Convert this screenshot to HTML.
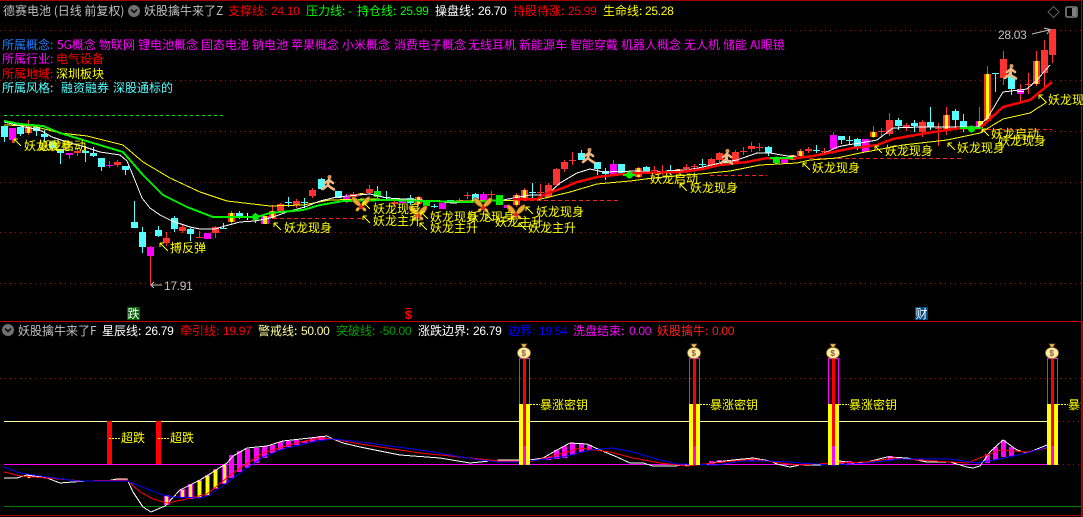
<!DOCTYPE html>
<html lang="zh"><head><meta charset="utf-8"><title>妖股擒牛</title>
<style>
html,body{margin:0;padding:0;background:#000;width:1083px;height:517px;overflow:hidden}
svg{display:block;position:absolute;left:0;top:0}
text{font-family:"WenQuanYi Zen Hei","Noto Sans CJK SC","Liberation Sans",sans-serif;font-size:12px;white-space:pre}
.n{font-family:"Liberation Sans","WenQuanYi Zen Hei",sans-serif;font-size:12px;letter-spacing:-.3px}
.d{font-family:"Liberation Sans",sans-serif;font-weight:bold}
.y{fill:#ff0}.r{fill:#f00}.c{fill:#5ff}.m{fill:#f0f}.w{fill:#fff}.g{fill:#0f0}.s{fill:#c0c0c0}
.ln{fill:none;shape-rendering:crispEdges}
.cd path{fill:none;shape-rendering:crispEdges}
</style></head><body>
<svg width="1083" height="517" viewBox="0 0 1083 517" xmlns="http://www.w3.org/2000/svg">
<defs>
<g id="bf"><path d="M0 1C-2-5-7-8-9-7-10-3-6 1 0 3ZM0 1C2-5 7-8 9-7 10-3 6 1 0 3Z" fill="#e8a830" stroke="#7a4a10" stroke-width=".7"/><path d="M-1 3C-3 3-6 4-5 7-3 8-1 6-1 3ZM1 3C3 3 6 4 5 7 3 8 1 6 1 3Z" fill="#f0c040" stroke="#7a4a10" stroke-width=".6"/><circle cy="3" r="2.2" fill="#f02020"/></g>
<g id="pn"><circle cx="0.5" cy="-6" r="2" fill="#d89858"/><path d="M0-3.5L-1 2-6 6M-1 2L1 4 5 6.5M0-3-4 0M0-3 4 0" fill="none" stroke="#f0b880" stroke-width="2.6" stroke-linecap="round" stroke-linejoin="round"/></g>
</defs>
<rect width="1083" height="517" fill="#000"/>
<!-- frame -->
<g class="ln">
<path d="M0 .5H1081" stroke="#a00000"/>
<path d="M0 321.5H1081" stroke="#c00000"/>
<path d="M1081.5 0V321" stroke="#a00000"/>
<path d="M1082 321V517" stroke="#b00000" stroke-width="2"/>
<path d="M0 515.5H1081" stroke="#a00000"/>
<path d="M0 30.5H1081M0 80.5H1081M0 131.5H1081M0 182.5H1081M0 232.5H1081M0 283.5H1081M0 378.5H1081" stroke="#a01010" stroke-dasharray="1 4"/>
<path d="M4 115.5H224" stroke="#00e000" stroke-dasharray="3 3"/>
<path d="M273 218.5H363M523 200.5H620M710 175.5H767M810 158.5H963M987 129.5H1052" stroke="#ff2020" stroke-dasharray="4 3"/>
</g>
<!-- candles -->
<g class="cd">
<path stroke="#5ff" d="M4.5 126V142M20.5 127V136M36.5 127V136M44.5 130V142M52.5 141V150M60.5 149V164M85.5 146V162M93.5 147V157M101.5 158V171M125.5 166V175M134.5 201V228M142.5 227V253M158.5 226V237M174.5 216V232M190.5 228V241M223.5 223V229M239.5 211V219M255.5 213V223M288.5 197V207M304.5 198V208M321.5 178V190M377.5 186V198M386.5 191V201M410.5 195V205M434.5 204V208M475.5 193V201M532.5 183V198M581.5 150V160M597.5 162V175M605.5 168V180M621.5 164V175M646.5 166V173M670.5 165V175M702.5 159V167M727.5 155V165M768.5 146V156M816.5 145V153M841.5 136V144M849.5 136V144M857.5 138V150M898.5 118V130M914.5 120V132M930.5 107V130M955.5 109V128M963.5 114V132M995.5 73V92M1011.5 70V95"/>
<path stroke="#5ff" stroke-width="7" d="M4.5 126V137M20.5 127V134M36.5 127V131M44.5 134V137M52.5 142V148M60.5 149V153M85.5 151V153M93.5 153V156M101.5 158V167M125.5 166V170M134.5 222V228M142.5 232V247M158.5 230V236M174.5 218V229M190.5 229V234M223.5 228V229M239.5 213V216M288.5 202V203M304.5 202V203M321.5 179V189M338.5 191V198M386.5 197V198M410.5 198V203M434.5 206V207M450.5 200V202M475.5 194V200M532.5 192V193M581.5 153V160M597.5 162V169M605.5 171V174M621.5 164V174M646.5 167V172M670.5 170V171M702.5 164V165M727.5 160V164M768.5 147V153M816.5 150V151M841.5 136V140M849.5 140V141M857.5 139V148M898.5 120V126M914.5 123V126M930.5 122V127M955.5 111V120M963.5 121V127M995.5 73V74M1011.5 76V89"/>
<path stroke="#fff" d="M247.5 213V220"/><path stroke="#fff" stroke-width="7" d="M247.5 216V217"/>
<path stroke="#ff3232" d="M12.5 128V143M28.5 120V135M69.5 153V159M77.5 148V156M117.5 160V167M150.5 246V285M166.5 232V246M182.5 224V233M199.5 231V238M215.5 226V238M231.5 211V225M272.5 205V219M280.5 203V213M296.5 199V208M312.5 188V198M353.5 192V198M369.5 185V194M394.5 200V206M418.5 196V206M459.5 198V203M467.5 192V199M491.5 191V198M516.5 193V207M524.5 188V199M540.5 184V197M548.5 183V198M556.5 168V186M564.5 160V172M572.5 152V165M638.5 167V178M654.5 166V174M662.5 165V175M686.5 164V173M694.5 164V172M711.5 158V168M719.5 152V163M735.5 150V163M743.5 147V155M751.5 142V152M759.5 143V151M800.5 149V157M808.5 147V153M824.5 148V155M873.5 126V138M881.5 128V137M889.5 113V136M906.5 123V131M922.5 120V137M938.5 123V146M946.5 107V135M979.5 107V129M987.5 66V122M1003.5 51V85M1020.5 84V101M1028.5 73V94M1036.5 51V86M1044.5 40V88M1052.5 29V63"/>
<path stroke="#ff3232" stroke-width="7" d="M28.5 127V133M77.5 151V153M117.5 162V165M166.5 238V243M182.5 227V231M199.5 237V238M215.5 227V233M231.5 213V222M272.5 211V218M280.5 204V211M296.5 201V205M312.5 190V196M353.5 194V197M361.5 193V195M369.5 189V193M394.5 202V204M418.5 197V204M459.5 200V202M467.5 195V196M491.5 194V195M516.5 195V205M524.5 190V198M540.5 192V193M548.5 185V197M556.5 169V185M564.5 162V169M572.5 160V161M638.5 168V177M654.5 170V171M662.5 171V172M678.5 169V173M686.5 167V169M694.5 166V167M711.5 159V165M719.5 153V160M735.5 152V162M743.5 151V152M751.5 146V149M759.5 147V148M792.5 155V160M800.5 151V156M808.5 149V151M824.5 151V152M873.5 132V137M881.5 131V132M889.5 120V134M906.5 125V128M922.5 122V132M938.5 128V129M946.5 115V129M987.5 74V121M1003.5 59V78M1028.5 84V85M1036.5 61V84M1044.5 50V73M1052.5 29V55"/>
<path stroke="#ff0" stroke-width="3" d="M28.5 127V133M231.5 213V222M272.5 211V218M361.5 193V195M418.5 197V204M516.5 195V205M524.5 190V198M638.5 168V177M678.5 169V173M792.5 155V160M800.5 151V156M873.5 132V137M946.5 115V129M979.5 121V128M987.5 74V121M1036.5 61V84"/>
<path stroke="#f0f" d="M109.5 161V168M346.5 194V203M483.5 192V201M613.5 160V175M833.5 132V150"/>
<path stroke="#f0f" stroke-width="7" d="M12.5 128V140M69.5 153V155M109.5 165V166M150.5 247V256M207.5 233V239M346.5 197V202M402.5 200V203M442.5 203V209M483.5 194V200M507.5 205V208M613.5 164V174M784.5 158V163M833.5 135V149M865.5 139V152M1020.5 89V94"/>
<path stroke="#fff" stroke-width="7" d="M1020.5 91V92"/>
<path stroke="#ff0" stroke-width="7" d="M264.5 216V224M979.5 121V128" opacity=".95"/>
<path stroke="#f0f" stroke-width="2" d="M262 216V224M268 216V224M977 121V128"/>
<path stroke="#0e0" stroke-width="7" d="M377.5 191V197M426.5 201V206M499.5 195V205M776.5 157V163"/>
</g>
<!-- moving averages -->
<g fill="none" shape-rendering="crispEdges">
<polyline stroke="#ff0" points="4,125 33,126 60,133 87,136 123,145 143,162 170,178 200,192 227,201 270,206 303,205 330,200 370,199 450,201 537,200 570,192 597,184 630,181 653,178 700,174 730,171 760,165 797,163 810,160 837,158 860,153 903,145 947,140 980,133 1003,119 1030,113 1047,102"/>
<polyline stroke="#fff" points="4,122 12,124 25,127 40,130 52,137 70,143 85,147 100,152 120,155 127,161 134,178 142,198 150,208 160,215 172,221 190,227 200,229 215,229 225,226 240,222 255,221 270,218 290,211 305,207 320,201 337,197 370,194 387,198 420,200 453,203 470,202 503,200 530,195 547,195 560,183 577,173 590,169 603,172 637,171 653,172 687,170 703,167 720,163 737,160 757,153 770,153 793,157 807,157 827,152 837,147 847,145 860,143 877,140 893,128 920,127 963,127 978,127 988,117 1003,92 1027,89 1037,80 1050,65"/>
<polyline stroke="#00f000" stroke-width="2" points="4,121 20,124 43,126 60,133 93,143 123,152 143,175 163,195 187,207 213,217 257,217 270,213 303,210 320,205 343,201 387,200 470,202 503,200"/>
<polyline stroke="#ff0000" stroke-width="2.5" points="513,199 537,199 548,193 563,188 577,182 597,177 623,174 640,173 680,172 703,169 720,165 747,162 767,158 797,158 813,156 833,152 853,148 877,145 893,139 927,133 960,128 980,128 1003,107 1030,100 1052,82"/>
<path stroke="#00f000" stroke-width="2" d="M623 175H636M770 158H793M960 128H981"/>
</g>
<circle cx="255.5" cy="217" r="3.5" fill="#0e0"/><circle cx="629.5" cy="175" r="3.5" fill="#0e0"/><circle cx="776.5" cy="160" r="3.5" fill="#0e0"/><circle cx="971.5" cy="129" r="3.5" fill="#0e0"/>
<!-- person icons -->
<use href="#pn" x="329" y="183"/><use href="#pn" x="589" y="156"/><use href="#pn" x="727" y="157"/><use href="#pn" x="1011" y="72"/>
<!-- butterflies -->
<use href="#bf" x="361" y="204"/><use href="#bf" x="418" y="213"/><use href="#bf" x="483" y="205"/><use href="#bf" x="516" y="212"/>
<!-- yellow labels -->
<g class="y">
<text x="24" y="150">妖龙现身</text><text x="38" y="150">妖龙启动</text>
<text x="170" y="252">搏反弹</text>
<text x="284" y="232">妖龙现身</text>
<text x="373" y="213">妖龙现身</text><text x="373" y="225">妖龙主升</text>
<text x="430" y="221">妖龙现身</text><text x="430" y="232">妖龙主升</text>
<text x="467" y="221">妖龙现身</text><text x="495" y="226">妖龙主升</text>
<text x="528" y="232">妖龙主升</text><text x="536" y="216">妖龙现身</text>
<text x="650" y="183">妖龙启动</text><text x="690" y="192">妖龙现身</text>
<text x="812" y="172">妖龙现身</text><text x="885" y="155">妖龙现身</text>
<text x="957" y="152">妖龙现身</text><text x="991" y="138">妖龙启动</text>
<text x="998" y="145">妖龙现身</text>
<text x="1048" y="104">妖龙现身</text>
</g>
<path fill="none" stroke="#ff0" shape-rendering="crispEdges" d="M14 139l7 7M14 139h4M14 139v4M160 243l8 8M160 243h4M160 243v4M274 223l7 7M274 223h4M274 223v4M363 202l7 7M363 202h4M363 202v4M363 216l7 7M363 216h4M363 216v4M421 212l7 7M421 212h4M421 212v4M420 223l7 7M420 223h4M420 223v4M486 214l7 7M486 214h4M486 214v4M519 223l7 7M519 223h4M519 223v4M526 207l7 7M526 207h4M526 207v4M680 184l7 7M680 184h4M680 184v4M803 163l7 7M803 163h4M803 163v4M875 146l7 7M875 146h4M875 146v4M948 143l7 7M948 143h4M948 143v4M982 129l7 7M982 129h4M982 129v4M1039 95l7 7M1039 95h4M1039 95v4"/>
<!-- extremes -->
<text class="n s" x="164" y="290">17.91</text>
<path fill="none" stroke="#c0c0c0" shape-rendering="crispEdges" d="M151 285H162M151 285l3-3M151 285l3 3"/>
<text class="n s" x="998" y="39">28.03</text>
<path fill="none" stroke="#c0c0c0" d="M1032 34L1049 30M1044 28L1050 29.5 1047 34"/>
<!-- header -->
<text x="3" y="15" fill="#c0c0c0">德赛电池 (日线 前复权)</text>
<circle cx="134" cy="11" r="6" fill="#707070"/><path d="M131 9.5l3 3 3-3" fill="none" stroke="#000" stroke-width="1.4"/>
<text x="144" y="15" fill="#c0c0c0">妖股擒牛来了Z</text>
<text x="228" y="15" class="r">支撑线:</text><text class="n r" x="271" y="15">24.10</text>
<text x="306" y="15" class="g">压力线:</text><text class="n g" x="348" y="15">-</text>
<text x="357" y="15" class="g">持仓线:</text><text class="n g" x="400" y="15">25.99</text>
<text x="435" y="15" class="w">操盘线:</text><text class="n w" x="478" y="15">26.70</text>
<text x="513" y="15" class="r">持股待涨:</text><text class="n r" x="568" y="15">25.99</text>
<text x="603" y="15" class="y">生命线:</text><text class="n y" x="645" y="15">25.28</text>
<path d="M1053.5 6.5l5.5 5.5-5.5 5.5-5.5-5.5z" fill="none" stroke="#606060"/>
<rect x="1066" y="7" width="11" height="10" rx="1.5" fill="none" stroke="#808080" stroke-width="1.6"/><rect x="1072" y="8" width="4" height="8" fill="#808080"/>
<!-- info rows -->
<text x="2" y="49" fill="#1e80ff">所属概念:</text>
<g class="m">
<text x="57" y="49">5G概念</text><text x="99" y="49">物联网</text><text x="138" y="49">锂电池概念</text><text x="201" y="49">固态电池</text><text x="252" y="49">钠电池</text><text x="291" y="49">苹果概念</text><text x="342" y="49">小米概念</text><text x="394" y="49">消费电子概念</text><text x="468" y="49">无线耳机</text><text x="519" y="49">新能源车</text><text x="570" y="49">智能穿戴</text><text x="621" y="49">机器人概念</text><text x="684" y="49">无人机</text><text x="723" y="49">储能</text><text x="750" y="49">AI眼镜</text>
<text x="2" y="63">所属行业:</text></g>
<text x="56" y="63" class="r">电气设备</text>
<text x="2" y="78" class="r">所属地域:</text><text x="56" y="78" class="y">深圳板块</text>
<g class="c"><text x="2" y="92">所属风格:</text><text x="61" y="92">融资融券</text><text x="113" y="92">深股通标的</text></g>
<!-- axis markers -->
<rect x="127" y="307" width="13" height="13" fill="#006000"/><text x="127.5" y="318" class="w">跌</text>
<text x="405" y="319" class="r d">$</text><path d="M405.5 308.5h6" stroke="#f00"/>
<rect x="915" y="307" width="13" height="13" fill="#004a80"/><text x="915.5" y="318" class="w">财</text>
<!-- lower header -->
<circle cx="8" cy="330" r="6" fill="#707070"/><path d="M5 328.5l3 3 3-3" fill="none" stroke="#000" stroke-width="1.4"/>
<text x="18" y="335" fill="#c0c0c0">妖股擒牛来了F</text>
<text x="102" y="335" class="w">星辰线:</text><text class="n w" x="145" y="335">26.79</text>
<text x="180" y="335" class="r">牵引线:</text><text class="n r" x="223" y="335">19.97</text>
<text x="258" y="335" fill="#ffffa0">警戒线:</text><text class="n" fill="#ffffa0" x="301" y="335">50.00</text>
<text x="336" y="335" fill="#00a000">突破线:</text><text class="n" fill="#00a000" x="379" y="335">-50.00</text>
<text x="418" y="335" class="w">涨跌边界:</text><text class="n w" x="473" y="335">26.79</text>
<text x="508" y="335" fill="#0000ff">边界:</text><text class="n" fill="#0000ff" x="539" y="335">19.54</text>
<text x="573" y="335" class="m">洗盘结束:</text><text class="n m" x="629" y="335">0.00</text>
<text x="657" y="335" fill="#ff2020">妖股擒牛:</text><text class="n" fill="#ff2020" x="712" y="335">0.00</text>
<!-- lower lines -->
<g class="ln">
<path d="M4 421.5H1047" stroke="#ffffa0"/>
<path d="M4 464.5H1047" stroke="#f0f"/>
<path d="M4 506.5H1081" stroke="#008000"/>
<path d="M1058 421.5H1081M1058 464.5H1081" stroke="#a01010" stroke-dasharray="1 4"/>
</g>
<g shape-rendering="crispEdges">
<path fill="#f0f" d="M27 475h4v3h-4zM115 479h5v2h-5zM122 479h5v2h-5zM164 495h5v10h-5zM180 489h5v9h-5zM188 484h5v15h-5zM197 480h5v18h-5zM205 475h5v21h-5zM213 469h5v20h-5zM222 464h5v20h-5zM229 455h5v23h-5zM237 451h5v21h-5zM245 449h5v19h-5zM254 448h5v15h-5zM262 446h5v12h-5zM270 445h5v8h-5zM278 442h5v8h-5zM286 441h5v6h-5zM294 440h5v5h-5zM302 441h5v2h-5zM310 438h5v4h-5zM318 436h7v4h-7zM546 457h5v3h-5zM554 450h5v9h-5zM562 446h5v12h-5zM570 443h5v12h-5zM579 444h5v8h-5zM587 445h5v5h-5zM709 461h5v3h-5zM717 460h5v3h-5zM749 458h5v3h-5zM839 461h5v4h-5zM847 461h5v4h-5zM888 456h5v4h-5zM985 454h5v9h-5zM993 447h5v13h-5zM1001 440h5v17h-5zM1009 447h5v9h-5z"/>
<path fill="#ff0" d="M28 475h2v3h-2zM165 496h3v8h-3zM181 490h3v7h-3zM189 485h3v13h-3zM198 481h3v16h-3zM206 476h3v19h-3zM214 470h3v18h-3zM223 465h3v18h-3z"/>
</g>
<g fill="none" shape-rendering="crispEdges">
<polyline stroke="#fff" points="4,478 17,478 27,475 47,478 60,483 73,482 87,481 107,481 117,479 127,479 133,492 143,507 151,512 165,506 180,490 200,480 213,472 227,463 233,456 247,448 267,446 283,441 310,438 327,436 333,439 343,443 360,447 400,455 440,458 470,463 500,460 530,460 543,458 557,450 570,443 587,444 600,450 617,457 630,463 643,463 653,466 673,466 707,464 717,462 733,460 753,458 770,461 777,464 790,467 800,465 820,465 840,461 853,463 867,462 887,457 907,458 927,462 950,462 967,467 973,468 980,466 990,452 1003,440 1017,450 1027,453 1047,445"/>
<polyline stroke="#f00" points="4,472 20,476 47,478 83,481 127,480 140,492 153,499 167,503 187,499 207,494 233,473 263,453 300,442 320,438 333,439 360,444 420,453 500,461 533,461 560,454 580,448 610,452 633,458 660,463 687,466 713,463 753,459 780,463 800,465 833,463 867,462 893,458 933,461 967,463 1000,450 1027,452 1047,448"/>
<polyline stroke="#00f" points="4,467 20,473 47,477 77,481 127,481 163,495 173,497 200,498 210,495 240,473 263,457 283,449 317,441 333,439 360,442 420,450 480,460 500,462 517,462 537,460 563,457 590,450 613,448 633,452 653,458 677,464 717,465 743,461 767,461 790,462 800,463 833,465 867,463 900,459 950,459 977,463 1000,459 1027,453 1047,447"/>
</g>
<!-- 超跌 -->
<g shape-rendering="crispEdges">
<rect x="107" y="421" width="5" height="43" fill="#f00"/><rect x="156" y="421" width="5" height="43" fill="#f00"/>
<path d="M109 438.5h11M158 438.5h11" stroke="#ff0" stroke-dasharray="2 1"/>
</g>
<text x="121" y="442" class="y">超跌</text><text x="170" y="442" class="y">超跌</text>
<!-- pillars -->
<g shape-rendering="crispEdges">
<g><rect x="519.5" y="358.5" width="10" height="46" fill="none" stroke="#f0f"/><rect x="519" y="404" width="11" height="61" fill="#ff0"/><rect x="523" y="358" width="3" height="107" fill="#f00"/><rect x="523" y="446" width="3" height="19" fill="#f0f"/><path d="M530 404.5h10" stroke="#ff0" stroke-dasharray="2 1"/></g>
<g><rect x="689.5" y="358.5" width="10" height="46" fill="none" stroke="#f0f"/><rect x="689" y="404" width="11" height="61" fill="#ff0"/><rect x="693" y="358" width="3" height="107" fill="#f00"/><rect x="693" y="446" width="3" height="19" fill="#f0f"/><path d="M700 404.5h10" stroke="#ff0" stroke-dasharray="2 1"/></g>
<g><rect x="828.5" y="358.5" width="10" height="46" fill="none" stroke="#f0f"/><rect x="828" y="404" width="11" height="61" fill="#ff0"/><rect x="832" y="358" width="3" height="107" fill="#f00"/><rect x="832" y="446" width="3" height="19" fill="#f0f"/><path d="M839 404.5h10" stroke="#ff0" stroke-dasharray="2 1"/></g>
<g><rect x="1047.5" y="358.5" width="10" height="46" fill="none" stroke="#f0f"/><rect x="1047" y="404" width="11" height="61" fill="#ff0"/><rect x="1051" y="358" width="3" height="107" fill="#f00"/><rect x="1051" y="446" width="3" height="19" fill="#f0f"/><path d="M1058 404.5h10" stroke="#ff0" stroke-dasharray="2 1"/></g>
</g>
<g class="y"><text x="540" y="409">暴涨密钥</text><text x="710" y="409">暴涨密钥</text><text x="849" y="409">暴涨密钥</text></g>
<svg x="0" y="0" width="1081" height="517"><text x="1068" y="409" class="y">暴涨密钥</text></svg>
<!-- money bags -->
<g>
<g transform="translate(524,351)"><ellipse cy="2" rx="6.5" ry="5.5" fill="#fff0a0" stroke="#a08030" stroke-width=".8"/><path d="M-3-7h6l-2 3h-2z" fill="#f0d060" stroke="#905020" stroke-width=".7"/><text class="d" x="-2.5" y="5" style="font-size:8px" fill="#905050">$</text></g>
<g transform="translate(694,351)"><ellipse cy="2" rx="6.5" ry="5.5" fill="#fff0a0" stroke="#a08030" stroke-width=".8"/><path d="M-3-7h6l-2 3h-2z" fill="#f0d060" stroke="#905020" stroke-width=".7"/><text class="d" x="-2.5" y="5" style="font-size:8px" fill="#905050">$</text></g>
<g transform="translate(833,351)"><ellipse cy="2" rx="6.5" ry="5.5" fill="#fff0a0" stroke="#a08030" stroke-width=".8"/><path d="M-3-7h6l-2 3h-2z" fill="#f0d060" stroke="#905020" stroke-width=".7"/><text class="d" x="-2.5" y="5" style="font-size:8px" fill="#905050">$</text></g>
<g transform="translate(1052,351)"><ellipse cy="2" rx="6.5" ry="5.5" fill="#fff0a0" stroke="#a08030" stroke-width=".8"/><path d="M-3-7h6l-2 3h-2z" fill="#f0d060" stroke="#905020" stroke-width=".7"/><text class="d" x="-2.5" y="5" style="font-size:8px" fill="#905050">$</text></g>
</g>
</svg>
</body></html>
